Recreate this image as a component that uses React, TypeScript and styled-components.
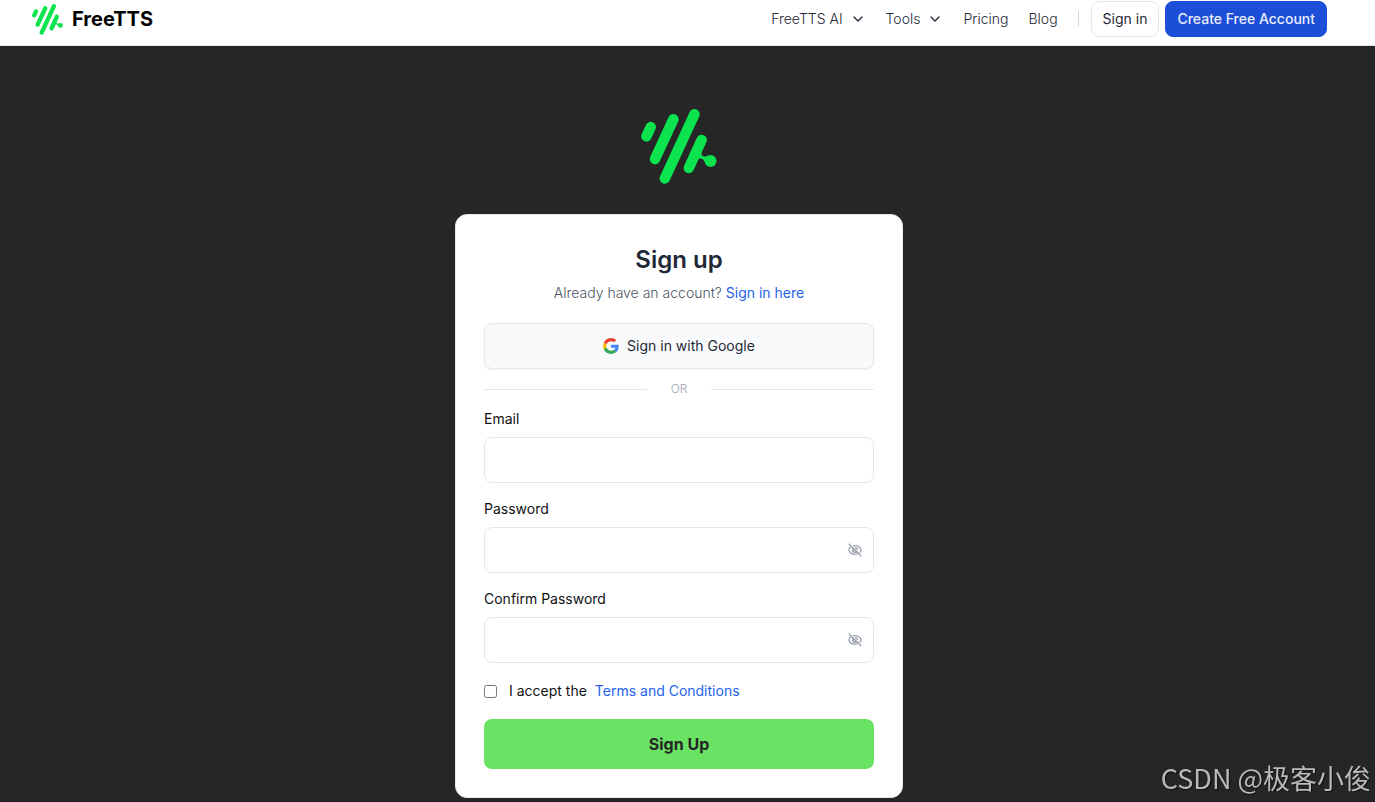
import React from 'react';
import styled, { createGlobalStyle } from 'styled-components';
import { ChevronDown } from 'lucide-react';

const GlobalStyle = createGlobalStyle`
  *, *::before, *::after { box-sizing: border-box; }
  html, body, #root { height: 100%; }
  body {
    margin: 0;
    background: #262626;
    color: #1f2937;
    font-family: Inter, "Liberation Sans", "Noto Sans CJK SC", sans-serif;
    font-size: 14px;
    line-height: 20px;
  }
  button, input { font: inherit; color: inherit; }
  a { color: inherit; text-decoration: none; }
  h1 { margin: 0; }
`;

const Page = styled.div`
  min-height: 100%;
  display: flex;
  flex-direction: column;
  border-bottom: 1px solid #24171c;
`;

const Header = styled.header`
  display: flex;
  align-items: flex-start;
  justify-content: space-between;
  height: 46px;
  padding: 1px 48px 0 32px;
  background: #fff;
  border-bottom: 1px solid #e5e7eb;
`;

const Brand = styled.a`
  display: flex;
  align-items: center;
  gap: 9px;
  height: 36px;
  color: #000;
  font-size: 20px;
  font-weight: 700;
`;

const Nav = styled.nav`
  display: flex;
  align-items: center;
  height: 36px;
  gap: 20px;
`;

const MenuButton = styled.button`
  display: flex;
  align-items: center;
  gap: 7px;
  padding: 0;
  border: 0;
  background: none;
  font-weight: 300;
  cursor: pointer;
`;

const NavLink = styled.a`
  font-weight: 300;
`;

const Separator = styled.span`
  width: 1px;
  height: 16px;
  background: #d1d5db;
`;

const Actions = styled.div`
  display: flex;
  align-items: center;
  gap: 6px;
  margin-left: -8px;
`;

const HeaderButton = styled.button<{ $primary?: boolean }>`
  height: 36px;
  padding: 0 11px;
  border-radius: 8px;
  border: 1px solid ${(p) => (p.$primary ? '#1d4ed8' : '#e5e7eb')};
  background: ${(p) => (p.$primary ? '#1d4ed8' : '#fff')};
  color: ${(p) => (p.$primary ? '#e8edfb' : '#1f2937')};
  font-weight: ${(p) => (p.$primary ? 500 : 400)};
  white-space: nowrap;
  cursor: pointer;
`;

const Main = styled.main`
  flex: 1;
  display: flex;
  flex-direction: column;
  align-items: center;
  gap: 30px;
  padding: 63px 17px 3px 0;
`;

const Card = styled.form`
  display: flex;
  flex-direction: column;
  gap: 16px;
  width: 100%;
  max-width: 448px;
  padding: 28px;
  border: 1px solid #e5e7eb;
  border-radius: 12px;
  background: #fff;
`;

const Intro = styled.div`
  display: flex;
  flex-direction: column;
  align-items: center;
  gap: 6px;
  padding-bottom: 4px;
`;

const Title = styled.h1`
  font-size: 24px;
  line-height: 34px;
  font-weight: 600;
`;

const Subtitle = styled.div`
  color: #4b5563;
  font-weight: 300;
`;

const BlueLink = styled.a`
  color: #2563eb;
  font-weight: 400;
`;

const Providers = styled.div`
  display: flex;
  flex-direction: column;
  margin-bottom: -16px;
`;

const GoogleButton = styled.button`
  display: flex;
  align-items: center;
  justify-content: center;
  gap: 8px;
  height: 46px;
  border: 1px solid #e5e7eb;
  border-radius: 8px;
  background: #f9fafb;
  box-shadow: 0 1px 2px rgba(0, 0, 0, 0.05);
  cursor: pointer;
`;

const Divider = styled.div`
  display: flex;
  align-items: center;
  gap: 24px;
  height: 40px;
  color: #9ca3af;
  font-size: 12px;
  font-weight: 300;
  &::before, &::after {
    content: '';
    flex: 1;
    height: 1px;
    background: #e5e7eb;
  }
`;

const Field = styled.div`
  display: flex;
  flex-direction: column;
  gap: 8px;
`;

const Label = styled.label`
  color: #111;
  font-weight: 400;
`;

const InputBox = styled.div`
  display: flex;
  align-items: center;
  height: 46px;
  padding-right: 11px;
  border: 1px solid #e5e7eb;
  border-radius: 8px;
`;

const Input = styled.input`
  flex: 1;
  min-width: 0;
  height: 100%;
  padding: 0 12px;
  border: 0;
  outline: 0;
  background: transparent;
`;

const IconButton = styled.button`
  display: flex;
  padding: 0;
  border: 0;
  background: none;
  color: #9ca3af;
  cursor: pointer;
`;

const Terms = styled.div`
  display: flex;
  align-items: center;
  gap: 8px;
  height: 24px;
`;

const Checkbox = styled.input`
  width: 13px;
  height: 13px;
  margin: 0 4px 0 0;
`;

const Submit = styled.button`
  height: 50px;
  border: 0;
  border-radius: 8px;
  background: #6ae263;
  color: #262626;
  font-size: 16px;
  font-weight: 700;
  cursor: pointer;
`;

const Watermark = styled.div`
  position: fixed;
  right: 4px;
  bottom: 6px;
  color: #b9b9b9;
  font-family: "Noto Sans CJK SC", sans-serif;
  font-size: 27px;
  line-height: 36px;
  text-shadow: 1px 1px 1px #111;
`;

const Logo = ({ width, height }: { width: number; height: number }) => (
  <svg width={width} height={height} viewBox="62 40 230 228" fill="none" aria-hidden="true">
    <g stroke="#0be34f" strokeWidth="32" strokeLinecap="round">
      <path d="M91 95 78 123" />
      <path d="M160 71 104 192" />
      <path d="M224 56 134 251" />
      <path d="M246 134 207 219" />
    </g>
    <circle cx="273" cy="198" r="18" fill="#0be34f" />
    <path d="M246 172C244 186 256 186 266 181L259 209C254 194 249 188 236 191Z" fill="#0be34f" />
  </svg>
);

const GoogleIcon = () => (
  <svg width="16" height="16" viewBox="0 0 48 48" aria-hidden="true">
    <path fill="#EA4335" d="M24 9.500c3.540 0 6.710 1.220 9.210 3.600l6.850-6.850C35.900 2.380 30.470 0 24 0 14.620 0 6.510 5.380 2.560 13.220l7.980 6.190C12.430 13.720 17.740 9.500 24 9.500z" />
    <path fill="#4285F4" d="M46.980 24.550c0-1.570-.15-3.090-.38-4.550H24v9.020h12.940c-.58 2.960-2.260 5.480-4.780 7.180l7.730 6c4.510-4.180 7.090-10.360 7.090-17.650z" />
    <path fill="#FBBC05" d="M10.530 28.590c-.48-1.450-.76-2.990-.76-4.590s.27-3.140.76-4.590l-7.980-6.190C.92 16.460 0 20.120 0 24c0 3.880.92 7.540 2.560 10.780l7.970-6.190z" />
    <path fill="#34A853" d="M24 48c6.480 0 11.930-2.130 15.890-5.810l-7.730-6c-2.150 1.450-4.920 2.300-8.160 2.300-6.260 0-11.570-4.220-13.470-9.910l-7.980 6.190C6.510 42.620 14.620 48 24 48z" />
  </svg>
);

const EyeOffIcon = () => (
  <svg width="14" height="14" viewBox="0 0 14 14" fill="none" stroke="currentColor" strokeWidth="1.3" aria-hidden="true">
    <path d="M3 3.400C1.700 4.400 1 5.800.8 7c.7 2.400 3.100 4.300 6.200 4.300 1.300 0 2.500-.4 3.500-1M4.800 2.900c.7-.2 1.400-.3 2.200-.3 3.100 0 5.500 2 6.200 4.400-.3 1.100-.9 2.100-1.800 2.800" />
    <path d="M5.300 5.300a2.400 2.400 0 0 0 3.400 3.400Z" fill="currentColor" fillOpacity="0.5" />
    <path d="M7 4.600A2.400 2.400 0 0 1 9.400 7" />
    <path d="M.7.7 13.300 13.300" />
  </svg>
);

function TextField({ id, label, type }: { id: string; label: string; type: string }) {
  return (
    <Field>
      <Label htmlFor={id}>{label}</Label>
      <InputBox>
        <Input id={id} type={type} />
        {type === 'password' && (
          <IconButton type="button" aria-label="Show password">
            <EyeOffIcon />
          </IconButton>
        )}
      </InputBox>
    </Field>
  );
}

export default function App() {
  return (
    <>
      <GlobalStyle />
      <Page>
        <Header>
          <Brand href="#">
            <Logo width={31} height={31} />
            FreeTTS
          </Brand>
          <Nav>
            <MenuButton type="button">
              FreeTTS AI <ChevronDown size={16} />
            </MenuButton>
            <MenuButton type="button">
              Tools <ChevronDown size={16} />
            </MenuButton>
            <NavLink href="#">Pricing</NavLink>
            <NavLink href="#">Blog</NavLink>
            <Separator />
            <Actions>
              <HeaderButton type="button">Sign in</HeaderButton>
              <HeaderButton type="button" $primary>Create Free Account</HeaderButton>
            </Actions>
          </Nav>
        </Header>
        <Main>
          <Logo width={76} height={75} />
          <Card>
            <Intro>
              <Title>Sign up</Title>
              <Subtitle>
                Already have an account? <BlueLink href="#">Sign in here</BlueLink>
              </Subtitle>
            </Intro>
            <Providers>
              <GoogleButton type="button">
                <GoogleIcon />
                Sign in with Google
              </GoogleButton>
              <Divider>OR</Divider>
            </Providers>
            <TextField id="email" label="Email" type="email" />
            <TextField id="password" label="Password" type="password" />
            <TextField id="confirm" label="Confirm Password" type="password" />
            <Terms>
              <Checkbox id="terms" type="checkbox" />
              <Label htmlFor="terms">I accept the</Label>
              <BlueLink href="#">Terms and Conditions</BlueLink>
            </Terms>
            <Submit type="submit">Sign Up</Submit>
          </Card>
        </Main>
      </Page>
      <Watermark>CSDN @极客小俊</Watermark>
    </>
  );
}
